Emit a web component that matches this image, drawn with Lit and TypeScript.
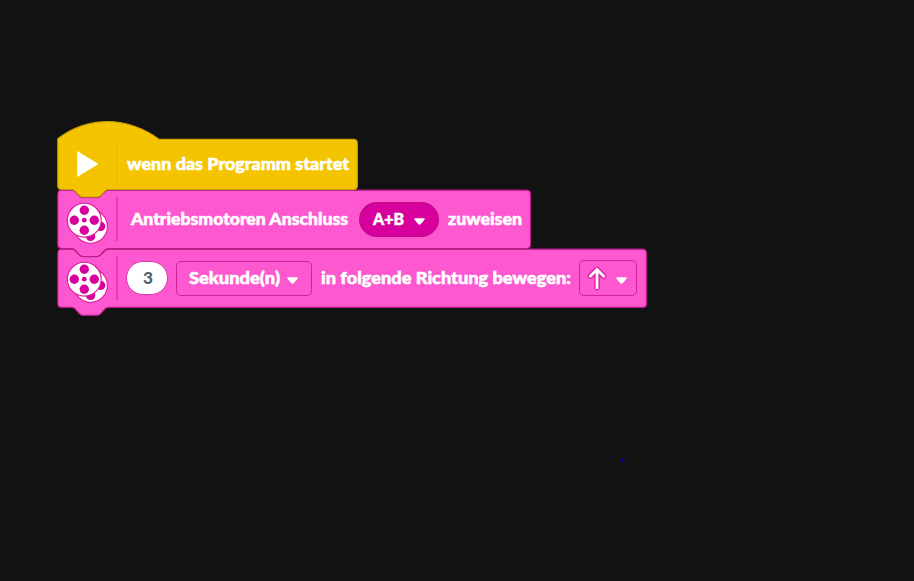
import { LitElement, html, svg, css } from "lit";
import { customElement, property } from "lit/decorators.js";

const YELLOW = "#f5c400";
const PINK = "#fd58cf";

@customElement("block-label")
class BlockLabel extends LitElement {
  @property() text = "";
  @property({ type: Number }) width = 0;
  @property({ type: Number }) size = 17.5;

  static styles = css`
    :host { display: block; flex: none; height: 24px; }
    svg { display: block; overflow: visible; }
    text { font-family: Lato, "Open Sans", sans-serif; font-weight: 900; fill: currentColor; stroke: currentColor; stroke-width: var(--label-stroke, .55px); }
  `;

  render() {
    return html`<svg width=${this.width} height="24">
      <text x="0" y="18" font-size=${this.size} textLength=${this.width} lengthAdjust="spacingAndGlyphs">${this.text}</text>
    </svg>`;
  }
}

@customElement("motor-icon")
class MotorIcon extends LitElement {
  static styles = css`
    :host { display: block; flex: none; width: 42px; height: 44px; }
    svg { display: block; }
    .wheel { fill: #fff; stroke: #e0189f; stroke-width: 1.1; }
    .hole { fill: #d8009c; }
  `;

  wheel(x: number, y: number, r: number) {
    return svg`<circle class="wheel" cx=${x} cy=${y} r=${r}></circle>
      <circle class="hole" cx=${x} cy=${y - 10} r="4.7"></circle>
      <circle class="hole" cx=${x} cy=${y + 10} r="4.7"></circle>
      <circle class="hole" cx=${x - 10} cy=${y} r="4.7"></circle>
      <circle class="hole" cx=${x + 10} cy=${y} r="4.7"></circle>
      <circle class="hole" cx=${x} cy=${y} r="2.4"></circle>`;
  }

  render() {
    return html`<svg width="42" height="44">
      ${this.wheel(24.6, 26.4, 16.8)}${this.wheel(18.3, 20.2, 16.9)}
    </svg>`;
  }
}

@customElement("app-root")
class AppRoot extends LitElement {
  static styles = css`
    :host {
      display: block; position: relative; box-sizing: border-box;
      width: 914px; height: 581px; overflow: hidden;
      padding: 139px 0 0 57px; background: #121212; color: #fff;
    }
    .stack { display: flex; flex-direction: column; align-items: flex-start; }
    .block { position: relative; display: flex; box-sizing: border-box; }
    .hat { width: 301px; height: 51px; z-index: 3; }
    .assign { width: 474px; height: 59px; z-index: 2; }
    .move { width: 590px; height: 59px; z-index: 1; }
    .shape { position: absolute; inset: 0; overflow: visible; pointer-events: none; }
    .row { position: relative; display: flex; align-items: center; height: 58px; }
    .hat .row { height: 50px; padding-left: 19px; }
    .assign .row, .move .row { padding-left: 9px; }
    .divider { flex: none; width: 2px; height: 44px; margin-left: 8px; background: #f034b6; }
    .assign motor-icon, .move motor-icon { margin-top: 5px; }
    .hat .divider { height: 40px; margin: -4px 0 0 17px; background: #efbc00; }
    .play { flex: none; display: block; width: 23px; height: 28px; }
    .field { display: flex; align-items: center; box-sizing: border-box; flex: none; height: 35px; border: 1.5px solid #cf229a; border-radius: 5px; }
    .port { width: 80px; margin-left: 11px; padding-left: 13px; border-color: #bd0c88; border-radius: 18px; background: #d8009c; }
    .number { --label-stroke: 0px; width: 42px; height: 34px; margin-left: 8px; padding-left: 16px; border-color: #d83aa7; border-radius: 17px; background: #fff; color: #575e75; }
    .unit { width: 136px; margin-left: 8px; padding-left: 12px; }
    .direction { width: 58px; height: 36px; margin-left: 8px; padding-left: 7px; }
    .caret { flex: none; display: block; width: 13px; height: 9px; margin-top: 4px; }
    .arrow { flex: none; display: block; width: 20px; height: 26px; }
    .speck { position: absolute; left: 621px; top: 458px; width: 4px; height: 5px; background: radial-gradient(closest-side, #0000d8 20%, #121212); }
  `;

  shape(path: string, fill: string, stroke: string) {
    return html`<svg class="shape" width="100%" height="100%">
      <path d=${path} fill=${fill} stroke=${stroke} stroke-width="1.2"></path>
    </svg>`;
  }

  body(width: number, bottom: number) {
    const r = width + 0.5, b = bottom, t = 0.2;
    return `M.8 ${t + 4}Q.8 ${t} 4.5 ${t}H14.5Q16.5 ${t} 18 ${t + 1.4}L22.5 ${t + 6}Q24 ${t + 7.5} 26 ${t + 7.5}H40Q42 ${t + 7.5} 43.5 ${t + 6}L48 ${t + 1.4}Q49.5 ${t} 51.5 ${t}H${r - 4}Q${r} ${t} ${r} ${t + 4}V${b - 4}Q${r} ${b} ${r - 4} ${b}H51.5Q49.5 ${b} 48 ${b + 1.4}L43.5 ${b + 6.4}Q42 ${b + 8} 40 ${b + 8}H26Q24 ${b + 8} 22.5 ${b + 6.4}L18 ${b + 1.4}Q16.5 ${b} 14.5 ${b}H4.8Q.8 ${b} .8 ${b - 4}Z`;
  }

  caret() {
    return html`<svg class="caret" viewBox="0 0 13 9">
      <path d="M2 2H11L7.3 6.4Q6.5 7.3 5.7 6.4Z" fill="#fff" stroke="#fff" stroke-width="1.6" stroke-linejoin="round"></path>
    </svg>`;
  }

  render() {
    return html`
      <div class="stack">
        <div class="block hat">
          ${this.shape(
            "M.8 -.2C15 -11 32 -17.3 51 -17.3C69 -17.3 88 -10.5 102 .3H296.5Q300.3 .3 300.3 4.3V46.5Q300.3 50.4 296.5 50.4H51.5Q49.5 50.4 48 51.8L43.5 56.6Q42 58 40 58H26Q24 58 22.5 56.6L18 51.8Q16.5 50.4 14.5 50.4H4.8Q.8 50.4 .8 46.4Z",
            YELLOW, "#cda400")}
          <div class="row">
            <svg class="play" viewBox="0 0 23 28"><path d="M1.2 1L22.5 14L1.2 27Z" fill="#fff"></path></svg>
            <span class="divider"></span>
            <block-label style="margin-left:9px" text="wenn das Programm startet" width="222"></block-label>
          </div>
        </div>
        <div class="block assign">
          ${this.shape(this.body(473, 58.5), PINK, "#b91c88")}
          <div class="row">
            <motor-icon></motor-icon>
            <span class="divider"></span>
            <block-label style="margin-left:13px" text="Antriebsmotoren Anschluss" width="217"></block-label>
            <div class="field port">
              <block-label text="A+B" width="31"></block-label>
              <span style="width:9px"></span>${this.caret()}
            </div>
            <block-label style="margin-left:9px" text="zuweisen" width="74"></block-label>
          </div>
        </div>
        <div class="block move">
          ${this.shape(this.body(589, 58.4), PINK, "#b91c88")}
          <div class="row">
            <motor-icon></motor-icon>
            <span class="divider"></span>
            <div class="field number"><block-label text="3" width="10" size="17.5"></block-label></div>
            <div class="field unit">
              <block-label text="Sekunde(n)" width="91"></block-label>
              <span style="width:6px"></span>${this.caret()}
            </div>
            <block-label style="margin-left:9px" text="in folgende Richtung bewegen:" width="250"></block-label>
            <div class="field direction">
              <svg class="arrow" viewBox="0 0 20 26">
                <path d="M10 22.5V5M3.5 11L10 4.5L16.5 11" fill="none" stroke="#e0189f" stroke-width="5.4" stroke-linecap="round" stroke-linejoin="round"></path>
                <path d="M10 22.5V5M3.5 11L10 4.5L16.5 11" fill="none" stroke="#fff" stroke-width="2.8" stroke-linecap="square"></path>
              </svg>
              <span style="width:8px"></span>${this.caret()}
            </div>
          </div>
        </div>
      </div>
      <span class="speck"></span>
    `;
  }
}
